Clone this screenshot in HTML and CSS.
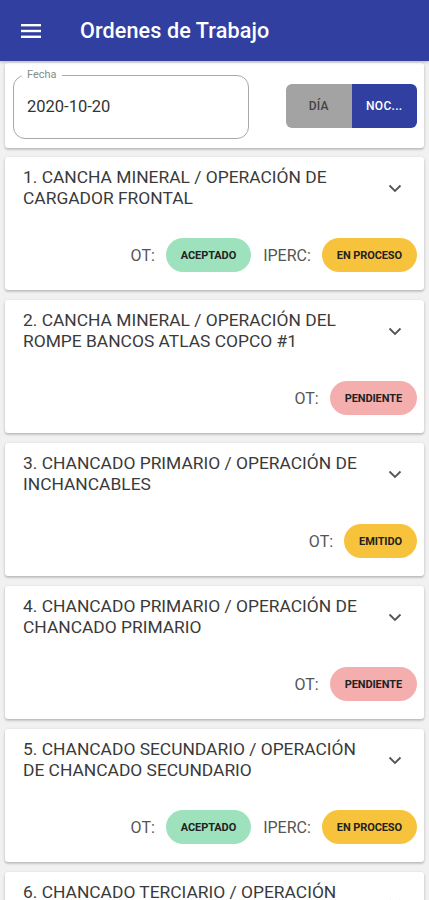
FILE: index.html
```html
<!DOCTYPE html>
<html lang="es">
<head>
<meta charset="utf-8">
<title>Ordenes de Trabajo</title>
<link rel="stylesheet" href="styles.css">
</head>
<body>
<header class="appbar">
  <svg class="menu-icon" width="20" height="14" viewBox="0 0 20 14"><rect x="0" y="0" width="20" height="2.4" fill="#fff"/><rect x="0" y="5.8" width="20" height="2.4" fill="#fff"/><rect x="0" y="11.6" width="20" height="2.4" fill="#fff"/></svg>
  <h1 class="appbar-title">Ordenes de Trabajo</h1>
</header>
<main class="content">
  <section class="card filter">
    <div class="field">
      <span class="field-label">Fecha</span>
      <span class="field-value">2020-10-20</span>
    </div>
    <div class="toggle">
      <span class="toggle-opt">DÍA</span>
      <span class="toggle-opt active">NOC...</span>
    </div>
  </section>

  <article class="card item">
    <div class="item-head">
      <p class="item-title">1. CANCHA MINERAL / OPERACIÓN DE CARGADOR FRONTAL</p>
      <span class="chev"><svg width="14" height="9" viewBox="0 0 14 9"><path d="M1.5 1.5 L7 7 L12.5 1.5" fill="none" stroke="#555" stroke-width="1.8"/></svg></span>
    </div>
    <div class="item-status">
      <span class="st-label">OT:</span><span class="pill green">ACEPTADO</span>
      <span class="st-label">IPERC:</span><span class="pill yellow">EN PROCESO</span>
    </div>
  </article>

  <article class="card item">
    <div class="item-head">
      <p class="item-title">2. CANCHA MINERAL / OPERACIÓN DEL ROMPE BANCOS ATLAS COPCO #1</p>
      <span class="chev"><svg width="14" height="9" viewBox="0 0 14 9"><path d="M1.5 1.5 L7 7 L12.5 1.5" fill="none" stroke="#555" stroke-width="1.8"/></svg></span>
    </div>
    <div class="item-status">
      <span class="st-label">OT:</span><span class="pill red">PENDIENTE</span>
    </div>
  </article>

  <article class="card item">
    <div class="item-head">
      <p class="item-title">3. CHANCADO PRIMARIO / OPERACIÓN DE INCHANCABLES</p>
      <span class="chev"><svg width="14" height="9" viewBox="0 0 14 9"><path d="M1.5 1.5 L7 7 L12.5 1.5" fill="none" stroke="#555" stroke-width="1.8"/></svg></span>
    </div>
    <div class="item-status">
      <span class="st-label">OT:</span><span class="pill yellow">EMITIDO</span>
    </div>
  </article>

  <article class="card item">
    <div class="item-head">
      <p class="item-title">4. CHANCADO PRIMARIO / OPERACIÓN DE CHANCADO PRIMARIO</p>
      <span class="chev"><svg width="14" height="9" viewBox="0 0 14 9"><path d="M1.5 1.5 L7 7 L12.5 1.5" fill="none" stroke="#555" stroke-width="1.8"/></svg></span>
    </div>
    <div class="item-status">
      <span class="st-label">OT:</span><span class="pill red">PENDIENTE</span>
    </div>
  </article>

  <article class="card item">
    <div class="item-head">
      <p class="item-title">5. CHANCADO SECUNDARIO / OPERACIÓN DE CHANCADO SECUNDARIO</p>
      <span class="chev"><svg width="14" height="9" viewBox="0 0 14 9"><path d="M1.5 1.5 L7 7 L12.5 1.5" fill="none" stroke="#555" stroke-width="1.8"/></svg></span>
    </div>
    <div class="item-status">
      <span class="st-label">OT:</span><span class="pill green">ACEPTADO</span>
      <span class="st-label">IPERC:</span><span class="pill yellow">EN PROCESO</span>
    </div>
  </article>

  <article class="card item">
    <div class="item-head">
      <p class="item-title">6. CHANCADO TERCIARIO / OPERACIÓN DE CHANCADO TERCIARIO</p>
      <span class="chev"><svg width="14" height="9" viewBox="0 0 14 9"><path d="M1.5 1.5 L7 7 L12.5 1.5" fill="none" stroke="#555" stroke-width="1.8"/></svg></span>
    </div>
    <div class="item-status">
      <span class="st-label">OT:</span><span class="pill red">PENDIENTE</span>
    </div>
  </article>
</main>
</body>
</html>
```

FILE: styles.css
```css
* { box-sizing: border-box; }
html, body { margin: 0; padding: 0; }
body {
  background: #f1f1f1;
  font-family: Roboto, "Liberation Sans", sans-serif;
  color: #333;
  overflow: hidden;
}
.appbar {
  height: 61px;
  background: #3140a0;
  display: flex;
  align-items: center;
  padding-left: 21px;
  box-shadow: 0 1px 3px rgba(0,0,0,0.25);
  position: relative;
  z-index: 2;
}
.menu-icon { display: block; }
.appbar-title {
  margin: 0 0 0 39px;
  color: #fff;
  font-size: 21.6px;
  font-weight: 500;
  letter-spacing: 0.1px;
}
.content {
  display: flex;
  flex-direction: column;
  gap: 10px;
  padding: 2px 5px 0 5px;
}
.card {
  background: #fff;
  border-radius: 3px;
  box-shadow: 0 1px 3px rgba(0,0,0,0.22), 0 2px 2px rgba(0,0,0,0.08);
}
.filter {
  height: 85px;
  display: flex;
  align-items: center;
  justify-content: space-between;
  padding: 0 7px 0 8px;
  margin-bottom: -1px;
}
.field {
  position: relative;
  width: 236px;
  height: 64px;
  border: 1px solid #a8a8a8;
  border-radius: 12px;
  display: flex;
  align-items: center;
  padding: 0 0 0 13px;
  margin-top: 2px;
}
.field-label {
  position: absolute;
  left: 8px;
  top: -7px;
  background: #fff;
  padding: 0 5px;
  font-size: 11px;
  color: #8a8a8a;
  line-height: 12px;
}
.field-value {
  font-size: 16.5px;
  color: #333;
}
.toggle {
  display: flex;
  width: 131px;
  height: 44px;
  border-radius: 6px;
  overflow: hidden;
}
.toggle-opt {
  flex: 1;
  display: flex;
  align-items: center;
  justify-content: center;
  background: #a3a3a3;
  color: #444;
  font-size: 12px;
  font-weight: 500;
  letter-spacing: 0.3px;
}
.toggle-opt.active {
  background: #3140a0;
  color: #fff;
}
.item {
  height: 133px;
  padding: 10px 5px 18px 18px;
  display: flex;
  flex-direction: column;
  justify-content: space-between;
}
.item-head {
  display: flex;
  align-items: center;
}
.item-title {
  flex: 1;
  margin: 0;
  font-size: 17.4px;
  line-height: 21px;
  color: #3a3a3a;
}
.chev {
  width: 48px;
  height: 40px;
  display: flex;
  align-items: center;
  justify-content: center;
  margin-left: 12px;
}
.item-status {
  display: flex;
  justify-content: flex-end;
  align-items: center;
  padding-right: 2px;
}
.st-label {
  font-size: 16px;
  color: #555;
  margin-right: 11px;
}
.pill + .st-label { margin-left: 12px; }
.pill {
  height: 34px;
  border-radius: 17px;
  display: inline-flex;
  align-items: center;
  padding: 0 15px;
  font-size: 11px;
  font-weight: 700;
  color: #222;
  letter-spacing: -0.1px;
}
.green { background: #9ee2bd; }
.yellow { background: #f8c33c; }
.red { background: #f4aeae; }
```
